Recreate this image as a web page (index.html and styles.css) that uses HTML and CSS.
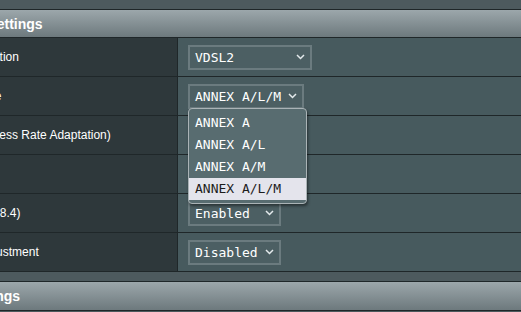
FILE: index.html
```html
<!DOCTYPE html>
<html lang="en">
  <head>
    <meta charset="UTF-8" />
    <meta name="viewport" content="width=device-width, initial-scale=1.0" />
    <title>xDSL Settings</title>
    <link rel="stylesheet" href="styles.css">
  </head>
  <body>
    <div class="page">
      <div class="band"></div>

      <!-- xDSL settings -->
      <section class="panel">
        <div class="panel-head">xDSL Settings</div>

        <div class="row">
          <div class="label">DSL Modulation</div>
          <div class="field">
            <div class="select w-wide"><span>VDSL2</span>
              <svg class="chev" width="9" height="6" viewBox="0 0 9 6"><polyline points="1,1 4.5,4.5 8,1" /></svg>
            </div>
          </div>
        </div>

        <div class="row">
          <div class="label">Annex Mode</div>
          <div class="field">
            <div class="select w-mid open"><span>ANNEX A/L/M</span>
              <svg class="chev" width="9" height="6" viewBox="0 0 9 6"><polyline points="1,1 4.5,4.5 8,1" /></svg>
              <ul class="menu">
                <li>ANNEX A</li>
                <li>ANNEX A/L</li>
                <li>ANNEX A/M</li>
                <li class="active">ANNEX A/L/M</li>
              </ul>
            </div>
          </div>
        </div>

        <div class="row">
          <div class="label">SRA (Seamless Rate Adaptation)</div>
          <div class="field">
            <div class="select w-small"><span>Enabled</span>
              <svg class="chev" width="9" height="6" viewBox="0 0 9 6"><polyline points="1,1 4.5,4.5 8,1" /></svg>
            </div>
          </div>
        </div>

        <div class="row">
          <div class="label">Bitswap</div>
          <div class="field">
            <div class="select w-small"><span>Enabled</span>
              <svg class="chev" width="9" height="6" viewBox="0 0 9 6"><polyline points="1,1 4.5,4.5 8,1" /></svg>
            </div>
          </div>
        </div>

        <div class="row">
          <div class="label">G.INP (G.998.4)</div>
          <div class="field">
            <div class="select w-small"><span>Enabled</span>
              <svg class="chev" width="9" height="6" viewBox="0 0 9 6"><polyline points="1,1 4.5,4.5 8,1" /></svg>
            </div>
          </div>
        </div>

        <div class="row">
          <div class="label">Stability Adjustment</div>
          <div class="field">
            <div class="select w-small"><span>Disabled</span>
              <svg class="chev" width="9" height="6" viewBox="0 0 9 6"><polyline points="1,1 4.5,4.5 8,1" /></svg>
            </div>
          </div>
        </div>
      </section>

      <div class="gap"></div>

      <section class="panel">
        <div class="panel-head tall">IP Settings</div>
      </section>
    </div>
  </body>
</html>
```

FILE: styles.css
```css
body {
  margin: 0;
  background: #4d5a5e;
  overflow: hidden;
  font-family: "Liberation Sans", Arial, sans-serif;
}

.page {
  width: 760px;
  margin-left: -76px;
}

.band {
  height: 9px;
}

.gap {
  height: 9px;
}

/* パネル */
.panel {
  border-top: 1px solid #1f2729;
  border-bottom: 1px solid #1f2729;
}

.panel-head {
  height: 27px;
  padding-left: 24px;
  display: flex;
  align-items: center;
  background: linear-gradient(#9ca7ab, #6d797d);
  color: #fff;
  font-size: 14px;
  font-weight: bold;
}

.panel-head.tall {
  height: 28px;
}

.row {
  display: grid;
  grid-template-columns: 254px 1fr;
  height: 38px;
  border-top: 1px solid #1f2729;
}

.label {
  box-sizing: border-box;
  padding-left: 10px;
  display: flex;
  align-items: center;
  background: #2e383b;
  border-right: 1px solid #1f2729;
  color: #fff;
  font-size: 12px;
  white-space: nowrap;
}

.field {
  padding-left: 10px;
  display: flex;
  align-items: center;
  background: #475a5e;
}

/* セレクト */
.select {
  position: relative;
  box-sizing: border-box;
  height: 25px;
  padding: 0 5px 0 5px;
  display: flex;
  align-items: center;
  justify-content: space-between;
  background: #4c5f63;
  border: 2px solid #6b7b7f;
  color: #fff;
  font-family: "DejaVu Sans Mono", monospace;
  font-size: 13px;
  white-space: nowrap;
}

.w-wide {
  width: 124px;
}

.w-mid {
  width: 116px;
}

.w-small {
  width: 93px;
}

.chev polyline {
  fill: none;
  stroke: #e4eaec;
  stroke-width: 1.5;
}

.menu {
  position: absolute;
  top: 22px;
  left: -2px;
  z-index: 2;
  box-sizing: border-box;
  width: 119px;
  margin: 0;
  padding: 3px 0;
  list-style: none;
  background: #586c70;
  border: 1px solid #aab3b6;
  border-radius: 4px;
  box-shadow: 1px 2px 3px rgba(0, 0, 0, 0.45);
}

.menu li {
  height: 22px;
  padding-left: 6px;
  display: flex;
  align-items: center;
  color: #fff;
}

.menu li.active {
  background: #e4e4ec;
  color: #1c1c1c;
}
```
